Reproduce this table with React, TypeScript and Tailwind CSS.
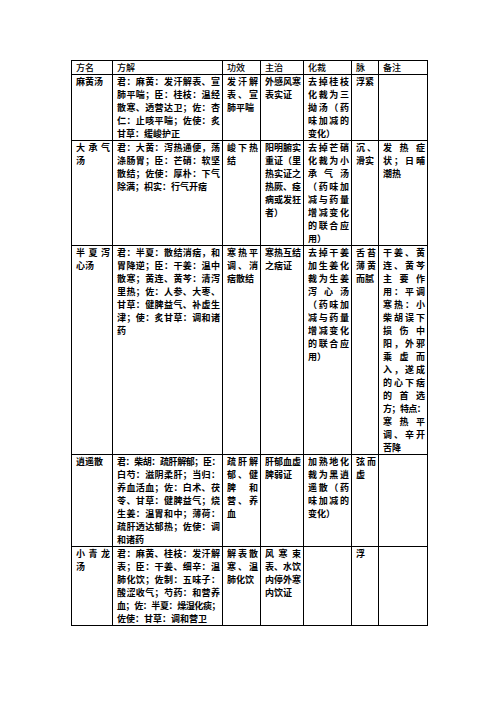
import React from "react";
import clsx from "clsx";

type Row = { name: string[]; cells: string[][] };

const TIGHT = new Set<string>(["君：柴胡：疏肝解郁；臣：", "血；佐：半夏：燥湿化痰；"]);
const TIGHTER = new Set<string>(["方；特点："]);

const rows: Row[] = [
  {
    name: ["麻黄汤"],
    cells: [
      ["君：麻黄：发汗解表、宣", "肺平喘；臣：桂枝：温经", "散寒、透营达卫；佐：杏", "仁：止咳平喘；佐使：炙", "甘草：缓峻护正"],
      ["发汗解", "表、宣", "肺平喘"],
      ["外感风寒", "表实证"],
      ["去掉桂枝", "化裁为三", "拗汤（药", "味加减的", "变化）"],
      ["浮紧"],
      [],
    ],
  },
  {
    name: ["大承气", "汤"],
    cells: [
      ["君：大黄：泻热通便，荡", "涤肠胃；臣：芒硝：软坚", "散结；佐使：厚朴：下气", "除满；枳实：行气开痞"],
      ["峻下热", "结"],
      ["阳明腑实", "重证（里", "热实证之", "热厥、痉", "病或发狂", "者）"],
      ["去掉芒硝", "化裁为小", "承气汤", "（药味加", "减与药量", "增减变化", "的联合应", "用）"],
      ["沉、", "滑实"],
      ["发热症", "状；日晡", "潮热"],
    ],
  },
  {
    name: ["半夏泻", "心汤"],
    cells: [
      ["君：半夏：散结消痞，和", "胃降逆；臣：干姜：温中", "散寒；黄连、黄芩：清泻", "里热；佐：人参、大枣、", "甘草：健脾益气、补虚生", "津；使：炙甘草：调和诸", "药"],
      ["寒热平", "调、消", "痞散结"],
      ["寒热互结", "之痞证"],
      ["去掉干姜", "加生姜化", "裁为生姜", "泻心汤", "（药味加", "减与药量", "增减变化", "的联合应", "用）"],
      ["舌苔", "薄黄", "而腻"],
      ["干姜、黄", "连、黄芩", "主要作", "用：平调", "寒热：小", "柴胡误下", "损伤中", "阳，外邪", "乘虚而", "入，遂成", "的心下痞", "的首选", "方；特点：", "寒热平", "调、辛开", "苦降"],
    ],
  },
  {
    name: ["逍遥散"],
    cells: [
      ["君：柴胡：疏肝解郁；臣：", "白芍：滋阴柔肝；当归：", "养血活血；佐：白术、茯", "苓、甘草：健脾益气；烧", "生姜：温胃和中；薄荷：", "疏肝透达郁热；佐使：调", "和诸药"],
      ["疏肝解", "郁、健", "脾和", "营、养", "血"],
      ["肝郁血虚", "脾弱证"],
      ["加熟地化", "裁为黑逍", "遥散（药", "味加减的", "变化）"],
      ["弦而", "虚"],
      [],
    ],
  },
  {
    name: ["小青龙", "汤"],
    cells: [
      ["君：麻黄、桂枝：发汗解", "表；臣：干姜、细辛：温", "肺化饮；佐制：五味子：", "酸涩收气；芍药：和营养", "血；佐：半夏：燥湿化痰；", "佐使：甘草：调和营卫"],
      ["解表散", "寒、温", "肺化饮"],
      ["风寒束", "表、水饮", "内停外寒", "内饮证"],
      [],
      ["浮"],
      [],
    ],
  },
];

const headers = ["方名", "方解", "功效", "主治", "化裁", "脉", "备注"];

function Lines({ lines }: { lines: string[] }) {
  return (
    <>
      {lines.map((l, i) => {
        const last = i === lines.length - 1;
        return (
          <div
            key={i}
            className={clsx(
              "h-[13px] whitespace-nowrap",
              last ? "text-left" : "text-justify [text-align-last:justify]",
              TIGHT.has(l) && "tracking-[-0.5px]",
              TIGHTER.has(l) && "tracking-[-0.8px]"
            )}
          >
            {l}
          </div>
        );
      })}
    </>
  );
}

export default function App() {
  return (
    <div className="min-h-[702px] w-[496px] bg-white pt-[60px] pl-[71px] font-['Noto_Sans_CJK_SC','Noto_Sans_CJK_JP',sans-serif] text-[9px] leading-[13px] text-black">
      <table className="table-fixed border-collapse w-[356px]">
        <colgroup>
          <col className="w-[41px]" />
          <col className="w-[110px]" />
          <col className="w-[38px]" />
          <col className="w-[43px]" />
          <col className="w-[48px]" />
          <col className="w-[27px]" />
          <col className="w-[49px]" />
        </colgroup>
        <thead>
          <tr>
            {headers.map((h) => (
              <th
                key={h}
                className="border border-black p-0 pl-[4px] pr-[2px] text-left align-top font-medium h-[13px]"
              >
                <div className="h-[13px] whitespace-nowrap">{h}</div>
              </th>
            ))}
          </tr>
        </thead>
        <tbody>
          {rows.map((r, ri) => (
            <tr key={ri}>
              <td className="border border-black p-0 pl-[4px] pr-[2px] align-top font-bold">
                <Lines lines={r.name} />
              </td>
              {r.cells.map((c, ci) => (
                <td key={ci} className="border border-black p-0 pl-[4px] pr-[2px] align-top font-bold">
                  <Lines lines={c} />
                </td>
              ))}
            </tr>
          ))}
        </tbody>
      </table>
    </div>
  );
}
